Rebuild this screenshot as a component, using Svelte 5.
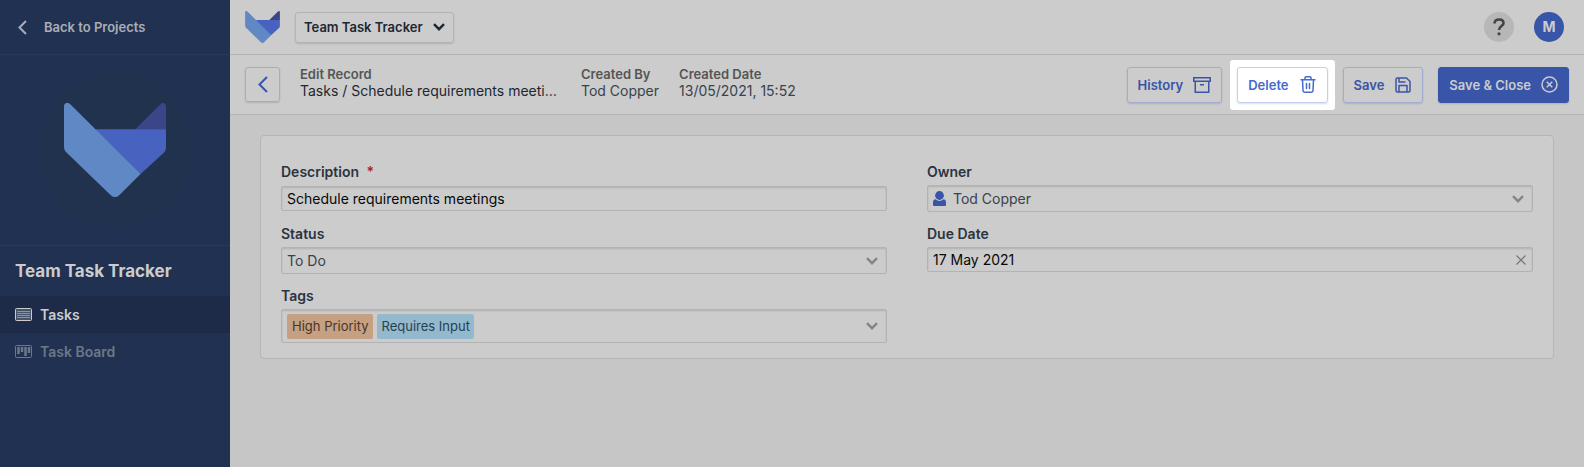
<script>
  let description = $state('Schedule requirements meetings');
  let status = $state('To Do');
  let owner = $state('Tod Copper');
  let dueDate = $state('17 May 2021');
  const tags = [
    { name: 'High Priority', tone: 'orange' },
    { name: 'Requires Input', tone: 'blue' }
  ];
</script>

{#snippet logo()}
  <svg class="logo" viewBox="64 103 102 94" aria-hidden="true">
    <path fill="#3a4687" d="M135 129.500L160.500 104.200C163 101.800 166 103 166 106.500V129.500Z" />
    <path fill="#4862c0" d="M95 129.300H166V147C166 149.500 165.500 151 163.500 153L140 174.500L120 160Z" />
    <path fill="#5f88c4" d="M64 106.500C64 103 67.500 101.500 70 104L140.500 174L119.500 195C116.700 197.700 113.300 197.700 110.500 195L66.500 152.500C64.700 150.700 64 149 64 146.500Z" />
  </svg>
{/snippet}

{#snippet chevron()}
  <svg class="chevron" width="12" height="8" viewBox="0 0 12 8" fill="none" stroke="currentColor" stroke-width="2.400" aria-hidden="true"><path d="M1 1.200L6 6.200L11 1.200" /></svg>
{/snippet}

<div class="app">
  <aside>
    <a class="back" href="#projects">
      <svg width="9" height="15" viewBox="0 0 9 15" fill="none" stroke="currentColor" stroke-width="2" aria-hidden="true"><path d="M8 1L1.500 7.500L8 14" /></svg>
      Back to Projects
    </a>
    <div class="brand"><div class="disc">{@render logo()}</div></div>
    <h1>Team Task Tracker</h1>
    <nav>
      <a class="active" href="#tasks">
        <svg width="17" height="13" viewBox="0 0 17 13" fill="none" stroke="currentColor" aria-hidden="true">
          <rect x=".5" y=".5" width="16" height="12" rx="1" fill="#475468" />
          <path d="M2 3.500H15M2 5.500H15M2 7.500H15M2 9.500H15" stroke="#8b939f" />
        </svg>
        Tasks
      </a>
      <a href="#board">
        <svg width="17" height="13" viewBox="0 0 17 13" fill="none" stroke="currentColor" aria-hidden="true">
          <rect x=".5" y=".5" width="16" height="12" rx="1" />
          <path d="M3.500 2V9M7 2V7M10.500 2V11M14 2V8" stroke-width="2.500" />
        </svg>
        Task Board
      </a>
    </nav>
  </aside>

  <div class="page">
    <header class="topbar">
      {@render logo()}
      <button class="switcher" aria-haspopup="menu">Team Task Tracker {@render chevron()}</button>
      <button class="round help" aria-label="Help">
        <svg width="12" height="18" viewBox="0 0 12 18" fill="none" stroke="#444" stroke-width="2.600" aria-hidden="true"><path d="M1.500 5.500C1.500 3 3.300 1.500 6 1.500S10.500 3 10.500 5.200C10.500 8 6 8.200 6 12" /><circle cx="6" cy="15.800" r="1.600" fill="#444" stroke="none" /></svg>
      </button>
      <button class="round avatar">M</button>
    </header>

    <div class="toolbar">
      <button class="btn square" aria-label="Back">
        <svg width="10" height="17" viewBox="0 0 10 17" fill="none" stroke="currentColor" stroke-width="2" aria-hidden="true"><path d="M9 1L1.500 8.500L9 16" /></svg>
      </button>
      <dl>
        <div class="crumb"><dt>Edit Record</dt><dd>Tasks / Schedule requirements meetings</dd></div>
        <div><dt>Created By</dt><dd class="soft">Tod Copper</dd></div>
        <div><dt>Created Date</dt><dd class="soft">13/05/2021, 15:52</dd></div>
      </dl>
      <div class="actions">
        <button class="btn">History
          <svg width="18" height="16" viewBox="0 0 18 16" fill="none" stroke="currentColor" stroke-width="1.500" aria-hidden="true"><path d="M.75 .75H17.250V4.250H.75ZM2.250 4.500V15.250H15.750V4.500M7 7.750H11" /></svg>
        </button>
        <div class="spotlight">
          <button class="btn">Delete
            <svg width="18" height="17" viewBox="-1 0 18 17" fill="none" stroke="currentColor" stroke-width="1.500" stroke-linecap="round" stroke-linejoin="round" aria-hidden="true"><path d="M1 3.750H15M2.500 4L3 14.500C3 15.600 3.700 16.200 4.500 16.200H11.500C12.300 16.200 13 15.600 13 14.500L13.500 4M5 3.500V2C5 1.300 5.400 .8 6 .8H10C10.600 .8 11 1.300 11 2V3.500M6.500 7.500V12.500M9.500 7.500V12.500" /></svg>
          </button>
        </div>
        <button class="btn">Save
          <svg width="18" height="16" viewBox="-1 0 18 16" fill="none" stroke="currentColor" stroke-width="1.500" stroke-linejoin="round" aria-hidden="true"><path d="M1 2.500C1 1.500 1.500 1 2.500 1H11.500L15 4.500V13.500C15 14.500 14.500 15 13.500 15H2.500C1.500 15 1 14.500 1 13.500ZM4 15V8.500H12V15M4 1V5H10.500" /></svg>
        </button>
        <button class="btn primary">Save &amp; Close
          <svg width="17" height="17" viewBox="0 0 17 17" fill="none" stroke="currentColor" stroke-width="1.500" aria-hidden="true"><circle cx="8.500" cy="8.500" r="7.500" /><path d="M5.700 5.700L11.300 11.300M11.300 5.700L5.700 11.300" /></svg>
        </button>
      </div>
    </div>

    <main>
      <form class="card">
        <div class="column">
          <div class="field">
            <label for="description">Description <span class="required">*</span></label>
            <div class="control line"><input id="description" bind:value={description} required /></div>
          </div>
          <div class="field">
            <label for="status">Status</label>
            <div class="control">
              <select id="status" bind:value={status}><option>To Do</option><option>Done</option></select>
              {@render chevron()}
            </div>
          </div>
          <div class="field">
            <span class="label" id="tags-label">Tags</span>
            <button type="button" class="control tags" aria-haspopup="listbox" aria-labelledby="tags-label">
              {#each tags as tag}<span class="tag {tag.tone}">{tag.name}</span>{/each}
              {@render chevron()}
            </button>
          </div>
        </div>
        <div class="column">
          <div class="field">
            <label for="owner">Owner</label>
            <div class="control">
              <svg class="person" width="13" height="15" viewBox="0 0 13 15" fill="#3855a8" aria-hidden="true"><circle cx="6.500" cy="4.500" r="4.400" /><path d="M0 15V11.500C0 9.500 1 8.300 2.800 8.300C4.800 10.600 8.200 10.600 10.200 8.300C12 8.300 13 9.500 13 11.500V14Q13 15 12 15H1Q0 15 0 14Z" /></svg>
              <select id="owner" bind:value={owner}><option>Tod Copper</option></select>
              {@render chevron()}
            </div>
          </div>
          <div class="field">
            <label for="due">Due Date</label>
            <div class="control short">
              <input id="due" bind:value={dueDate} />
              <button type="button" class="clear" aria-label="Clear date" onclick={() => (dueDate = '')}>
                <svg width="10" height="10" viewBox="0 0 10 10" stroke="currentColor" stroke-width="1.200" aria-hidden="true"><path d="M.5 .5L9.500 9.500M9.500 .5L.5 9.500" /></svg>
              </button>
            </div>
          </div>
        </div>
      </form>
    </main>
  </div>
</div>

<style>
  :global(body) { margin: 0; background: #c6c6c6; }
  * { box-sizing: border-box; }
  button, input, select { font: inherit; color: inherit; margin: 0; }
  button { cursor: pointer; }
  svg { display: block; flex: none; }

  .app { display: flex; min-height: 100vh; font: 400 14px/18px Inter, "Liberation Sans", sans-serif; color: #1c2730; }

  aside { flex: 0 0 230px; background: #213151; color: #cccccc; }
  a { color: inherit; text-decoration: none; }
  .back { display: flex; align-items: center; gap: 17px; height: 55px; padding-left: 18px; border-bottom: 1px solid #293a5c; font-size: 13px; font-weight: 600; color: #a9aeb6; }
  .brand { display: grid; place-items: center; height: 191px; border-bottom: 1px solid #293a5c; }
  .disc { display: grid; place-items: center; width: 154px; height: 154px; border-radius: 50%; background: #21324e; }
  .disc :global(.logo) { width: 102px; height: 94px; }
  h1 { margin: 0; padding: 0 15px; font-size: 17px; line-height: 50px; font-weight: 700; }
  nav a { display: flex; align-items: center; gap: 8px; height: 37px; padding: 0 15px; font-weight: 600; color: #6d7788; }
  nav .active { background: #1d2b48; color: #cccccc; }

  .page { flex: 1; min-width: 0; display: flex; flex-direction: column; }
  .topbar, .toolbar { display: flex; align-items: center; background: #cccccc; border-bottom: 1px solid #b5b5b5; }
  .topbar { height: 55px; padding: 0 20px 0 15px; }
  .topbar > :global(.logo) { width: 35px; height: 32px; }
  .switcher { display: flex; align-items: center; gap: 10px; height: 31px; margin: 0 auto 0 15px; padding: 0 8px; border: 1px solid #b3b3b3; border-radius: 3px; background: transparent; box-shadow: 0 1px 2px #0002; font-size: 13px; font-weight: 600; }
  .round { display: grid; place-items: center; width: 30px; height: 30px; padding: 0; border: 0; border-radius: 50%; }
  .help { margin-right: 20px; background: #b7b7b7; }
  .avatar { background: #3855a8; color: #cccccc; font-weight: 700; }

  .toolbar { height: 60px; padding: 0 15px; }
  .btn { display: flex; align-items: center; justify-content: center; gap: 10px; height: 36px; padding: 0 10px; border: 1px solid #9fadd0; border-radius: 3px; background: transparent; box-shadow: 0 1px 2px #0002; color: #3855a8; font-size: 13px; font-weight: 600; white-space: nowrap; }
  .square { width: 35px; height: 35px; padding: 0; }
  .primary { border-color: #3855a8; background: #3855a8; color: #cccccc; }
  .spotlight { margin: 0 -7px; padding: 7px; border-radius: 3px; background: #ffffff; }
  .spotlight .btn { border-color: #c2cff0; color: #456ad0; }
  .actions { display: flex; align-items: center; gap: 15px; margin-left: auto; }
  dl { display: flex; gap: 20px; min-width: 0; margin: 0 20px; padding-bottom: 4px; }
  dt { font-size: 13px; line-height: 16px; font-weight: 600; color: #555555; }
  dd { margin: 0; line-height: 18px; white-space: nowrap; overflow: hidden; text-overflow: ellipsis; }
  .crumb { width: 261px; }
  .soft { color: #38434e; }

  main { padding: 20px 30px; }
  .card { display: grid; grid-template-columns: 1fr 1fr; gap: 40px; padding: 26px 20px 15px; border: 1px solid #b5b5b5; border-radius: 4px; background: #cccccc; }
  .column { display: flex; flex-direction: column; gap: 12px; }
  .field { display: flex; flex-direction: column; gap: 4px; }
  label, .label { font-weight: 600; line-height: 19px; color: #2a3440; }
  .required { margin-left: 4px; color: #b32020; }
  .control { display: flex; align-items: center; height: 27px; padding: 0 8px 0 5px; border: 1px solid #b3b3b3; border-radius: 2px; background: transparent; box-shadow: inset 0 1px 2px #0002; color: #3a424b; }
  .line { height: 25px; margin: 1px 0; }
  .short { height: 25px; padding-right: 6px; }
  .control input, .control select { flex: 1; min-width: 0; height: 100%; padding: 0; border: 0; outline: 0; background: transparent; appearance: none; }
  .control input { color: #080808; }
  .control :global(.chevron) { margin-left: auto; color: #858585; }
  .person { margin-right: 7px; }
  .clear { padding: 0; border: 0; background: transparent; color: #777777; }
  .tags { gap: 4px; height: 34px; }
  .tag { padding: 0 4px 0 5px; border-radius: 2px; font-size: 13px; line-height: 25px; }
  .orange { background: #c5a082; color: #4a3526; }
  .blue { background: #94b9cc; color: #263f52; }
</style>
